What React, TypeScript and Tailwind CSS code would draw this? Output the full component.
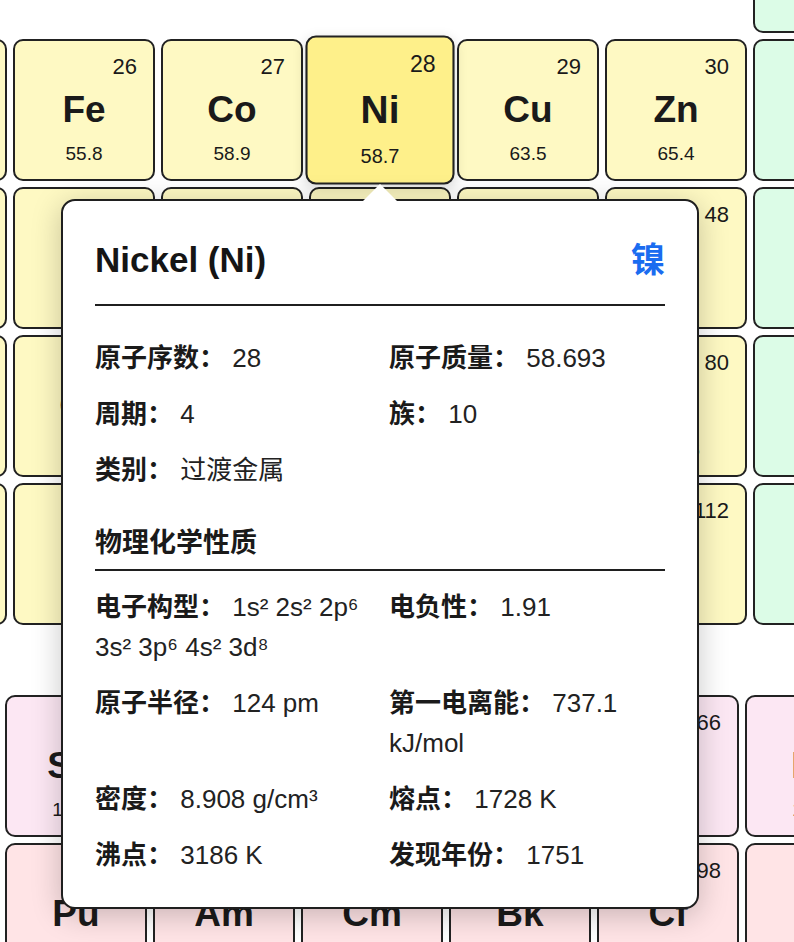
import React from 'react';

type El = { n: number; s: string; m: string; c: 't' | 'p' | 'l' | 'a' };

const colors: Record<El['c'], string> = {
  t: 'bg-[#fef9c3]',
  p: 'bg-[#dcfce7]',
  l: 'bg-[#fce7f3]',
  a: 'bg-[#ffe4e6]',
};

const e = (n: number, s: string, m: string, c: El['c']): El => ({ n, s, m, c });

// groups 7..13, periods 3..7
const mainRows: (El | null)[][] = [
  [null, null, null, null, null, null, e(13, 'Al', '27.0', 'p')],
  [e(25, 'Mn', '54.9', 't'), e(26, 'Fe', '55.8', 't'), e(27, 'Co', '58.9', 't'), e(28, 'Ni', '58.7', 't'), e(29, 'Cu', '63.5', 't'), e(30, 'Zn', '65.4', 't'), e(31, 'Ga', '69.7', 'p')],
  [e(43, 'Tc', '98', 't'), e(44, 'Ru', '101.1', 't'), e(45, 'Rh', '102.9', 't'), e(46, 'Pd', '106.4', 't'), e(47, 'Ag', '107.9', 't'), e(48, 'Cd', '112.4', 't'), e(49, 'In', '114.8', 'p')],
  [e(75, 'Re', '186.2', 't'), e(76, 'Os', '190.2', 't'), e(77, 'Ir', '192.2', 't'), e(78, 'Pt', '195.1', 't'), e(79, 'Au', '197.0', 't'), e(80, 'Hg', '200.6', 't'), e(81, 'Tl', '204.4', 'p')],
  [e(107, 'Bh', '270', 't'), e(108, 'Hs', '277', 't'), e(109, 'Mt', '278', 't'), e(110, 'Ds', '281', 't'), e(111, 'Rg', '282', 't'), e(112, 'Cn', '285', 't'), e(113, 'Nh', '286', 'p')],
];

const fRows: El[][] = [
  [e(61, 'Pm', '145', 'l'), e(62, 'Sm', '150.4', 'l'), e(63, 'Eu', '152.0', 'l'), e(64, 'Gd', '157.3', 'l'), e(65, 'Tb', '158.9', 'l'), e(66, 'Dy', '162.5', 'l'), e(67, 'Ho', '164.9', 'l')],
  [e(93, 'Np', '237', 'a'), e(94, 'Pu', '244', 'a'), e(95, 'Am', '243', 'a'), e(96, 'Cm', '247', 'a'), e(97, 'Bk', '247', 'a'), e(98, 'Cf', '251', 'a'), e(99, 'Es', '252', 'a')],
];

function Cell({ el, active }: { el: El; active?: boolean }) {
  return (
    <div
      className={`flex h-[142px] w-[142px] flex-col rounded-[10px] border-2 border-[#222] px-[16px] pt-[13px] text-[#1a1a1a] ${
        active ? 'relative z-10 scale-105 bg-[#fef08a] shadow-[0_4px_12px_rgba(0,0,0,0.15)]' : colors[el.c]
      }`}
    >
      <div className="self-end text-[22px] leading-[26px]">{el.n}</div>
      <div className="mt-[8px] text-center text-[37px] font-bold leading-[44px]">{el.s}</div>
      <div className="mt-[11px] text-center text-[19px] leading-[22px]">{el.m}</div>
    </div>
  );
}

function Prop({ label, value, wide }: { label: string; value: React.ReactNode; wide?: boolean }) {
  return (
    <div className={wide ? 'col-span-2' : ''}>
      <span className="font-bold text-[#1a1a1a]">{label}：</span> {value}
    </div>
  );
}

export default function App() {
  return (
    <div
      className="relative h-[942px] w-[794px] overflow-hidden bg-white"
      style={{ fontFamily: '"Liberation Sans", "Noto Sans CJK SC", sans-serif' }}
    >
      {/* main table slice */}
      <div className="-ml-[135px] -mt-[109px] grid w-max grid-cols-[repeat(7,142px)] gap-[6px]">
        {mainRows.flat().map((el, i) =>
          el ? <Cell key={i} el={el} active={el.n === 28} /> : <div key={i} className="h-[142px]" />
        )}
      </div>

      {/* lanthanides / actinides */}
      <div className="-ml-[143px] mt-[70px] grid w-max grid-cols-[repeat(7,142px)] gap-[6px]">
        {fRows.flat().map((el) => (
          <Cell key={el.n} el={el} />
        ))}
      </div>

      {/* tooltip */}
      <div className="absolute left-[61px] top-[199px] z-20 w-[638px] rounded-[14px] border-2 border-[#1f1f1f] bg-white px-[32px] pb-[32px] pt-[38px] text-[#222] shadow-[0_6px_30px_rgba(0,0,0,0.22)]">
        <div className="absolute -top-[17px] left-[calc(50%-17px)] h-0 w-0 border-x-[17px] border-b-[17px] border-x-transparent border-b-white" />

        <div className="flex items-center justify-between border-b-2 border-[#1f1f1f] pb-[23px]">
          <h2 className="text-[35px] font-bold leading-[42px] text-[#151515]">Nickel (Ni)</h2>
          <span className="text-[34px] font-bold leading-[42px] text-[#1a6cf0]">镍</span>
        </div>

        <div className="mt-[32px] grid grid-cols-2 gap-x-[18px] gap-y-[16px] text-[26px] leading-[40px]">
          <Prop label="原子序数" value="28" />
          <Prop label="原子质量" value="58.693" />
          <Prop label="周期" value="4" />
          <Prop label="族" value="10" />
          <Prop label="类别" value="过渡金属" wide />
        </div>

        <h3 className="mt-[35px] border-b-2 border-[#1f1f1f] pb-[8px] text-[27px] font-bold leading-[36px] text-[#1a1a1a]">
          物理化学性质
        </h3>

        <div className="mt-[16px] grid grid-cols-2 gap-x-[18px] gap-y-[16px] text-[26px] leading-[40px]">
          <Prop label="电子构型" value="1s² 2s² 2p⁶ 3s² 3p⁶ 4s² 3d⁸" />
          <Prop label="电负性" value="1.91" />
          <Prop label="原子半径" value="124 pm" />
          <Prop label="第一电离能" value="737.1 kJ/mol" />
          <Prop label="密度" value="8.908 g/cm³" />
          <Prop label="熔点" value="1728 K" />
          <Prop label="沸点" value="3186 K" />
          <Prop label="发现年份" value="1751" />
        </div>
      </div>
    </div>
  );
}
